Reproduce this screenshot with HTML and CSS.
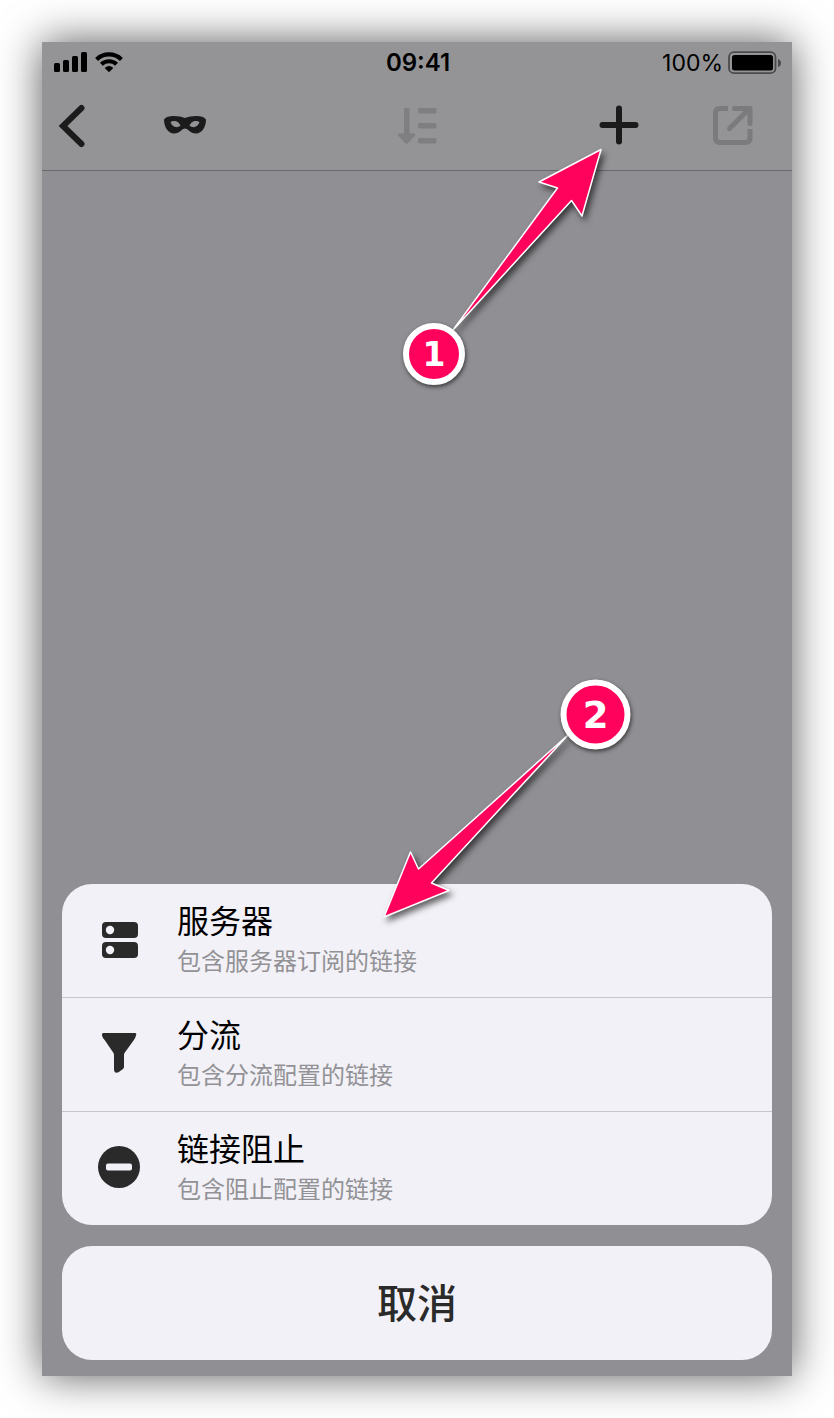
FILE: index.html
```html
<!DOCTYPE html>
<html lang="zh-CN">
<head>
<meta charset="utf-8">
<meta name="viewport" content="width=device-width, initial-scale=1">
<title>添加链接</title>
<link rel="stylesheet" href="styles.css">
</head>
<body>
<div class="phone">
  <header class="top">
    <div class="status">
      <div class="status-side">
        <svg width="34" height="22" viewBox="0 0 34 22" aria-hidden="true">
          <rect x="0" y="11" width="6" height="9" rx="1.500"/><rect x="9" y="8" width="6" height="12" rx="1.500"/><rect x="18" y="4" width="6" height="16" rx="1.500"/><rect x="27" y="0" width="6" height="20" rx="1.500"/>
        </svg>
        <svg width="28" height="22" viewBox="0 0 28 22" aria-hidden="true">
          <g fill="none" stroke="#000" stroke-width="4.200"><path d="M1.600 7.400A18 18 0 0 1 26.400 7.400"/><path d="M6.400 12.300A11 11 0 0 1 21.600 12.300"/></g>
          <path d="M9.700 16Q14 12 18.300 16L14.800 19.600Q14 20.400 13.200 19.600Z"/>
        </svg>
      </div>
      <time class="clock">09:41</time>
      <div class="status-side status-right">
        <span class="percent">100%</span>
        <svg width="54" height="24" viewBox="0 0 54 24" aria-hidden="true">
          <rect x="1" y="1.200" width="46.500" height="21" rx="5" fill="none" stroke="#4b4b4d" stroke-width="1.800"/><rect x="4" y="4" width="41" height="15.500" rx="2.500"/><path d="M50 8Q53 9 53 12T50 16Z" fill="#4b4b4d"/>
        </svg>
      </div>
    </div>
    <nav class="toolbar">
      <div class="tools">
        <button class="tool" aria-label="返回"><svg width="44" height="44" viewBox="0 0 44 44"><path class="stroke" d="M31.500 4L13 22L31.500 40" fill="none"/></svg></button>
        <button class="tool" aria-label="隐私"><svg width="44" height="44" viewBox="0 0 44 44"><path class="dark" fill-rule="evenodd" d="M1 15.500C4 10.500 16 11.500 22 14C28 11.500 40 10.500 43 15.500C43 23 39 29.500 33 29.500C27 29.500 25 24.500 22 24.500C19 24.500 17 29.500 11 29.500C5 29.500 1 23 1 15.500ZM7.500 18C9 22.800 13 24.500 17.500 22C16.500 17.500 11 15.500 7.500 18ZM36.500 18C33 15.500 27.500 17.500 26.500 22C31 24.500 35 22.800 36.500 18Z"/></svg></button>
      </div>
      <button class="tool" aria-label="排序" disabled><svg width="44" height="44" viewBox="0 0 44 44" fill="#7f7f81"><rect x="9" y="4" width="5.500" height="28" rx="1.500"/><path d="M3.500 29.500H19.500Q21 30 20 31.500L12.500 39.500Q11.500 40.300 10.500 39.500L3 31.500Q2 30 3.500 29.500Z"/><rect x="23" y="4" width="18.500" height="5.500" rx="1.500"/><rect x="23" y="19" width="18.500" height="5.500" rx="1.500"/><rect x="23" y="34" width="18.500" height="5.500" rx="1.500"/></svg></button>
      <div class="tools tools-right">
        <button class="tool" aria-label="添加"><svg width="44" height="44" viewBox="0 0 44 44"><path class="stroke" d="M21 4.500V37.500M4.500 21H37.500"/></svg></button>
        <button class="tool" aria-label="分享" disabled><svg width="44" height="44" viewBox="0 0 44 44" fill="none" stroke="#7b7b7d" stroke-width="5"><path d="M17 4.500H9Q4.500 4.500 4.500 9V34Q4.500 38.500 9 38.500H34.500Q39 38.500 39 34V25"/><path stroke-linecap="round" d="M18.500 24.500L37 6"/><path d="M23.500 4.500H39V19.500" stroke-linecap="round" stroke-linejoin="round"/></svg></button>
      </div>
    </nav>
  </header>

  <main class="content">
    <ul class="sheet">
      <li><button class="option">
        <svg width="44" height="44" viewBox="0 0 44 44" aria-hidden="true"><rect class="dark" x="5" y="4" width="36" height="16" rx="4"/><rect class="dark" x="5" y="24" width="36" height="16" rx="4"/><circle cx="13" cy="12" r="4.200" fill="#f2f1f7"/><circle cx="13" cy="32" r="4.200" fill="#f2f1f7"/></svg>
        <span class="text"><span class="name">服务器</span><span class="note">包含服务器订阅的链接</span></span>
      </button></li>
      <li><button class="option">
        <svg width="44" height="44" viewBox="0 0 44 44" aria-hidden="true"><path class="dark" d="M6 1H38Q40 1.500 39 3.500Q38.500 6 36.500 8.500L27.500 21Q27 22 27 23V34.500Q27 36 26 37L21.500 40.200Q17 42 17 37V23Q17 22 16.500 21L8 8.500Q5.500 6 5 3.500Q4.500 1.500 6 1Z"/></svg>
        <span class="text"><span class="name">分流</span><span class="note">包含分流配置的链接</span></span>
      </button></li>
      <li><button class="option">
        <svg width="44" height="44" viewBox="0 0 44 44" aria-hidden="true"><circle class="dark" cx="22" cy="21" r="21"/><rect x="9" y="17.500" width="26" height="7" rx="2" fill="#f2f1f7"/></svg>
        <span class="text"><span class="name">链接阻止</span><span class="note">包含阻止配置的链接</span></span>
      </button></li>
    </ul>
    <button class="cancel">取消</button>
  </main>

  <svg class="steps" viewBox="0 0 750 1334" role="img" aria-label="步骤 1 和 2">
    <g class="arrow">
      <path d="M411 288L515.500 146L497 140L559 107.500L540 174L529.500 158.500Z"/>
      <path d="M526 693L376.500 827L368.500 810L342 875L407 848.500L389.500 841Z"/>
    </g>
    <g class="badge"><circle cx="392" cy="312" r="28"/><circle cx="553.500" cy="672.500" r="32"/></g>
    <text class="num" x="392" y="324">1</text>
    <text class="num num-large" x="553.500" y="686">2</text>
  </svg>
</div>
</body>
</html>
```
FILE: styles.css
```css
* { box-sizing: border-box; }

body {
  margin: 0;
  padding: 42px;
  background: #fff;
  font-family: Inter, "Noto Sans CJK SC", sans-serif;
}

button {
  border: 0;
  padding: 0;
  background: none;
  font: inherit;
  text-align: left;
}

svg { display: block; }

.phone {
  position: relative;
  display: flex;
  flex-direction: column;
  min-height: calc(100vh - 84px);
  background: #908f94;
  box-shadow: 0 0 40px rgba(0, 0, 0, 0.65);
}

.top {
  background: #949496;
  border-bottom: 1px solid #69696c;
}

.status {
  display: grid;
  grid-template-columns: 1fr auto 1fr;
  align-items: center;
  height: 40px;
  padding: 1px 10px 0 12px;
  font-size: 24px;
  line-height: 24px;
}

.status-side {
  display: flex;
  align-items: center;
  gap: 7px;
}

.status-right {
  justify-content: flex-end;
  gap: 5px;
}

.percent { font-size: 23px; }

.clock { font-weight: 600; }

.toolbar {
  display: grid;
  grid-template-columns: 1fr auto 1fr;
  align-items: center;
  height: 88px;
  padding: 0 37px 0 8px;
}

.tools {
  display: flex;
  gap: 69px;
}

.toolbar > .tool { margin-left: 29px; }

.tools-right { justify-content: flex-end; }

.dark { fill: #2a2a2b; }

.toolbar .dark { fill: #1b1b1c; }

.stroke {
  stroke: #1b1b1c;
  stroke-width: 6;
  stroke-linecap: round;
}

.content {
  flex: 1;
  display: flex;
  flex-direction: column;
  justify-content: flex-end;
  gap: 21px;
  padding: 20px 20px 16px;
}

.sheet {
  margin: 0;
  padding: 0;
  list-style: none;
  overflow: hidden;
  border-radius: 30px;
  background: #f2f1f7;
}

.sheet li + li { border-top: 1px solid #c6c5cb; }

.option {
  display: flex;
  align-items: center;
  gap: 36px;
  width: 100%;
  height: 113px;
  padding: 0 35px 2px;
}

.text {
  display: flex;
  flex-direction: column;
  gap: 4px;
}

.name {
  color: #000;
  font-size: 32px;
  line-height: 40px;
}

.note {
  color: #929296;
  font-size: 24px;
  line-height: 32px;
}

.cancel {
  height: 114px;
  padding-bottom: 4px;
  border-radius: 30px;
  background: #f2f1f7;
  color: #2a2a2b;
  font-size: 40px;
  font-weight: 500;
  text-align: center;
}

.steps {
  position: absolute;
  top: 0;
  left: 0;
  width: 100%;
  pointer-events: none;
}

.arrow {
  fill: #ff035c;
  stroke: #fff;
  stroke-width: 1.5;
  stroke-linejoin: round;
  filter: drop-shadow(3px 4px 3px rgba(0, 0, 0, 0.6));
}

.badge {
  fill: #ff035c;
  stroke: #fff;
  stroke-width: 6;
  filter: drop-shadow(1px 2px 2px rgba(0, 0, 0, 0.6));
}

.num {
  fill: #fff;
  font-family: "DejaVu Sans", sans-serif;
  font-size: 33px;
  font-weight: 700;
  text-anchor: middle;
}

.num-large { font-size: 37px; }
```
